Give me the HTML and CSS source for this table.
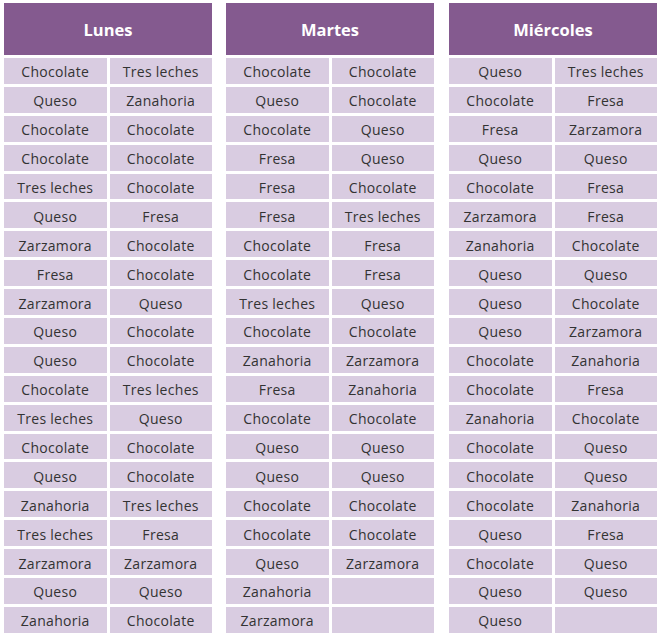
FILE: index.html
```html
<!DOCTYPE html>
<html lang="es">
<head>
<meta charset="utf-8">
<title>Sabores</title>
<link rel="stylesheet" href="styles.css">
</head>
<body>
<div class="page">
  <section class="day">
    <div class="head">Lunes</div>
    <div class="grid">
      <div class="c">Chocolate</div><div class="c">Tres leches</div>
      <div class="c">Queso</div><div class="c">Zanahoria</div>
      <div class="c">Chocolate</div><div class="c">Chocolate</div>
      <div class="c">Chocolate</div><div class="c">Chocolate</div>
      <div class="c">Tres leches</div><div class="c">Chocolate</div>
      <div class="c">Queso</div><div class="c">Fresa</div>
      <div class="c">Zarzamora</div><div class="c">Chocolate</div>
      <div class="c">Fresa</div><div class="c">Chocolate</div>
      <div class="c">Zarzamora</div><div class="c">Queso</div>
      <div class="c">Queso</div><div class="c">Chocolate</div>
      <div class="c">Queso</div><div class="c">Chocolate</div>
      <div class="c">Chocolate</div><div class="c">Tres leches</div>
      <div class="c">Tres leches</div><div class="c">Queso</div>
      <div class="c">Chocolate</div><div class="c">Chocolate</div>
      <div class="c">Queso</div><div class="c">Chocolate</div>
      <div class="c">Zanahoria</div><div class="c">Tres leches</div>
      <div class="c">Tres leches</div><div class="c">Fresa</div>
      <div class="c">Zarzamora</div><div class="c">Zarzamora</div>
      <div class="c">Queso</div><div class="c">Queso</div>
      <div class="c">Zanahoria</div><div class="c">Chocolate</div>
    </div>
  </section>
  <section class="day">
    <div class="head">Martes</div>
    <div class="grid">
      <div class="c">Chocolate</div><div class="c">Chocolate</div>
      <div class="c">Queso</div><div class="c">Chocolate</div>
      <div class="c">Chocolate</div><div class="c">Queso</div>
      <div class="c">Fresa</div><div class="c">Queso</div>
      <div class="c">Fresa</div><div class="c">Chocolate</div>
      <div class="c">Fresa</div><div class="c">Tres leches</div>
      <div class="c">Chocolate</div><div class="c">Fresa</div>
      <div class="c">Chocolate</div><div class="c">Fresa</div>
      <div class="c">Tres leches</div><div class="c">Queso</div>
      <div class="c">Chocolate</div><div class="c">Chocolate</div>
      <div class="c">Zanahoria</div><div class="c">Zarzamora</div>
      <div class="c">Fresa</div><div class="c">Zanahoria</div>
      <div class="c">Chocolate</div><div class="c">Chocolate</div>
      <div class="c">Queso</div><div class="c">Queso</div>
      <div class="c">Queso</div><div class="c">Queso</div>
      <div class="c">Chocolate</div><div class="c">Chocolate</div>
      <div class="c">Chocolate</div><div class="c">Chocolate</div>
      <div class="c">Queso</div><div class="c">Zarzamora</div>
      <div class="c">Zanahoria</div><div class="c"></div>
      <div class="c">Zarzamora</div><div class="c"></div>
    </div>
  </section>
  <section class="day day-last">
    <div class="head">Miércoles</div>
    <div class="grid">
      <div class="c">Queso</div><div class="c">Tres leches</div>
      <div class="c">Chocolate</div><div class="c">Fresa</div>
      <div class="c">Fresa</div><div class="c">Zarzamora</div>
      <div class="c">Queso</div><div class="c">Queso</div>
      <div class="c">Chocolate</div><div class="c">Fresa</div>
      <div class="c">Zarzamora</div><div class="c">Fresa</div>
      <div class="c">Zanahoria</div><div class="c">Chocolate</div>
      <div class="c">Queso</div><div class="c">Queso</div>
      <div class="c">Queso</div><div class="c">Chocolate</div>
      <div class="c">Queso</div><div class="c">Zarzamora</div>
      <div class="c">Chocolate</div><div class="c">Zanahoria</div>
      <div class="c">Chocolate</div><div class="c">Fresa</div>
      <div class="c">Zanahoria</div><div class="c">Chocolate</div>
      <div class="c">Chocolate</div><div class="c">Queso</div>
      <div class="c">Chocolate</div><div class="c">Queso</div>
      <div class="c">Chocolate</div><div class="c">Zanahoria</div>
      <div class="c">Queso</div><div class="c">Fresa</div>
      <div class="c">Chocolate</div><div class="c">Queso</div>
      <div class="c">Queso</div><div class="c">Queso</div>
      <div class="c">Queso</div><div class="c"></div>
    </div>
  </section>
</div>
</body>
</html>
```
FILE: styles.css
```css
html, body {
  margin: 0;
  padding: 0;
  background: #ffffff;
}
.page {
  display: flex;
  gap: 14px;
  padding: 3px 0 0 4px;
  font-family: "Open Sans", "Liberation Sans", sans-serif;
}
.day {
  width: 208px;
  display: flex;
  flex-direction: column;
  gap: 3px;
}
.day-last {
  margin-left: 1px;
}
.head {
  height: 52px;
  background: #845a8f;
  color: #ffffff;
  font-weight: 700;
  font-size: 16.5px;
  padding-top: 1px;
  box-sizing: border-box;
  display: flex;
  align-items: center;
  justify-content: center;
}
.grid {
  display: grid;
  grid-template-columns: 1fr 1fr;
  grid-auto-rows: 25.9px;
  column-gap: 3px;
  row-gap: 3px;
}
.c {
  background: #d9cce1;
  color: #333333;
  font-size: 14px;
  letter-spacing: 0.3px;
  padding-top: 2px;
  box-sizing: border-box;
  display: flex;
  align-items: center;
  justify-content: center;
}
```
